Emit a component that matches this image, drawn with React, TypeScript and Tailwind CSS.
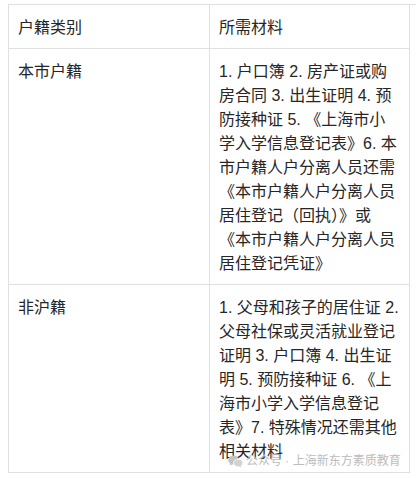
import React from "react";

const rows = [
  {
    kind: "本市户籍",
    lines: [
      "1. 户口簿 2. 房产证或购",
      "房合同 3. 出生证明 4. 预",
      "防接种证 5. 《上海市小",
      "学入学信息登记表》6. 本",
      "市户籍人户分离人员还需",
      "《本市户籍人户分离人员",
      "居住登记（回执）》或",
      "《本市户籍人户分离人员",
      "居住登记凭证》",
    ],
  },
  {
    kind: "非沪籍",
    lines: [
      "1. 父母和孩子的居住证 2.",
      "父母社保或灵活就业登记",
      "证明 3. 户口簿 4. 出生证",
      "明 5. 预防接种证 6. 《上",
      "海市小学入学信息登记",
      "表》7. 特殊情况还需其他",
      "相关材料",
    ],
  },
];

const WechatIcon = () => (
  <svg width="15" height="13" viewBox="0 0 15 13" fill="#c4c4c4">
    <ellipse cx="5.6" cy="5" rx="5.4" ry="4.5" />
    <path d="M2.2 8.2 L1.6 10.6 L4.6 9.2 Z" />
    <ellipse cx="10.2" cy="8" rx="4.6" ry="3.8" fill="#d2d2d2" stroke="#fff" strokeWidth="0.8" />
    <path d="M12.6 10.8 L13.6 12.6 L11 11.4 Z" fill="#d2d2d2" />
  </svg>
);

const cell = "border-r border-b border-[#e0e0e0] pl-[9px] pr-[9px] pt-[11px] pb-[8px]";

export default function App() {
  return (
    <div
      className="relative w-[416px] h-[478px] bg-white text-[16px] leading-[24px] text-[#262626]"
      style={{ fontFamily: '"Liberation Sans", "Noto Sans CJK SC", sans-serif' }}
    >
      <div className="pt-[4px] pl-[8px]">
        <div className="grid grid-cols-[201px_200px] border-l border-t border-[#e0e0e0]">
          <div className={cell}>户籍类别</div>
          <div className={cell}>所需材料</div>
          {rows.map((r) => (
            <React.Fragment key={r.kind}>
              <div className={cell}>{r.kind}</div>
              <div className={cell + " whitespace-nowrap"}>
                {r.lines.map((l, i) => (
                  <div key={i}>{l}</div>
                ))}
              </div>
            </React.Fragment>
          ))}
        </div>
      </div>

      {/* watermark overlay */}
      <div className="absolute left-[228px] top-[453px] flex items-center gap-[3px] text-[12px] leading-[16px] text-[#bcbcbc]">
        <WechatIcon />
        <span>公众号 · 上海新东方素质教育</span>
      </div>
    </div>
  );
}
